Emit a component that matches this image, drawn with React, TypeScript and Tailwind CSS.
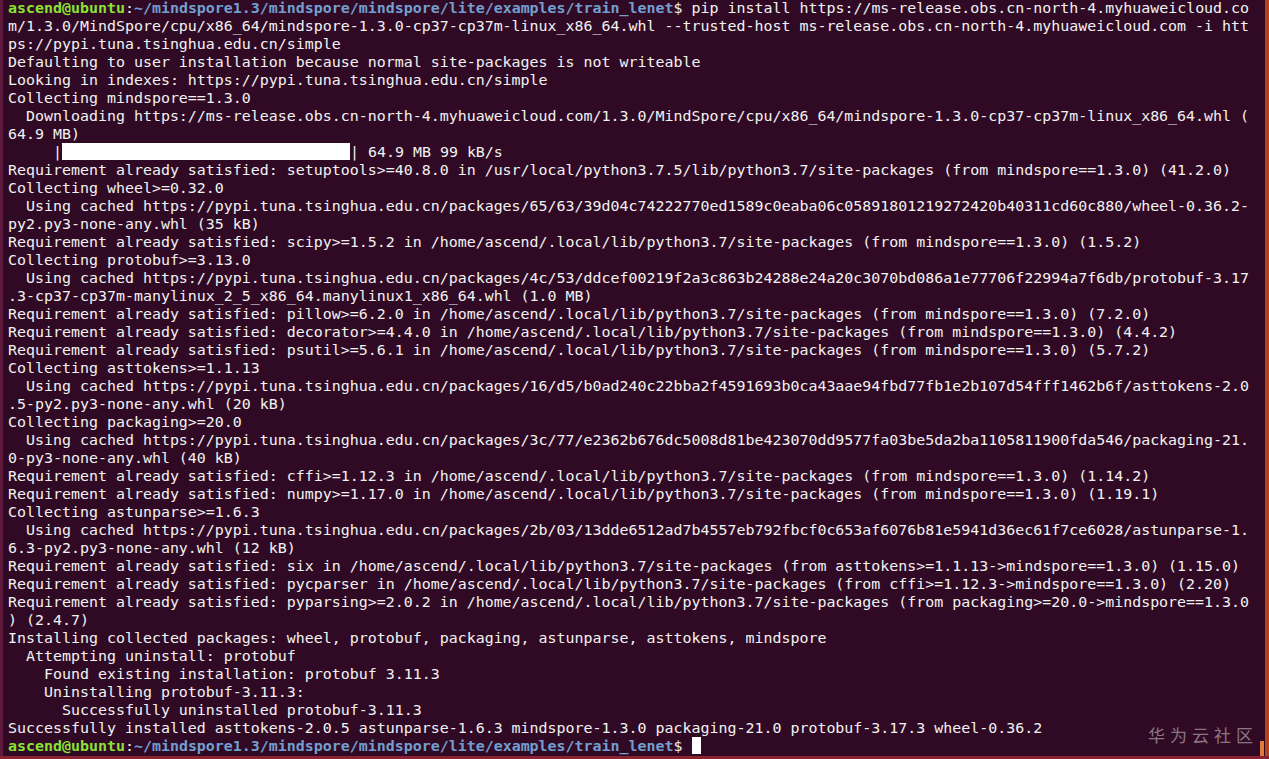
import React from "react";

const lines: string[] = [
	"m/1.3.0/MindSpore/cpu/x86_64/mindspore-1.3.0-cp37-cp37m-linux_x86_64.whl --trusted-host ms-release.obs.cn-north-4.myhuaweicloud.com -i htt",
	"ps://pypi.tuna.tsinghua.edu.cn/simple",
	"Defaulting to user installation because normal site-packages is not writeable",
	"Looking in indexes: https://pypi.tuna.tsinghua.edu.cn/simple",
	"Collecting mindspore==1.3.0",
	"  Downloading https://ms-release.obs.cn-north-4.myhuaweicloud.com/1.3.0/MindSpore/cpu/x86_64/mindspore-1.3.0-cp37-cp37m-linux_x86_64.whl (",
	"64.9 MB)",
];

const rest: string[] = [
	"Requirement already satisfied: setuptools>=40.8.0 in /usr/local/python3.7.5/lib/python3.7/site-packages (from mindspore==1.3.0) (41.2.0)",
	"Collecting wheel>=0.32.0",
	"  Using cached https://pypi.tuna.tsinghua.edu.cn/packages/65/63/39d04c74222770ed1589c0eaba06c05891801219272420b40311cd60c880/wheel-0.36.2-",
	"py2.py3-none-any.whl (35 kB)",
	"Requirement already satisfied: scipy>=1.5.2 in /home/ascend/.local/lib/python3.7/site-packages (from mindspore==1.3.0) (1.5.2)",
	"Collecting protobuf>=3.13.0",
	"  Using cached https://pypi.tuna.tsinghua.edu.cn/packages/4c/53/ddcef00219f2a3c863b24288e24a20c3070bd086a1e77706f22994a7f6db/protobuf-3.17",
	".3-cp37-cp37m-manylinux_2_5_x86_64.manylinux1_x86_64.whl (1.0 MB)",
	"Requirement already satisfied: pillow>=6.2.0 in /home/ascend/.local/lib/python3.7/site-packages (from mindspore==1.3.0) (7.2.0)",
	"Requirement already satisfied: decorator>=4.4.0 in /home/ascend/.local/lib/python3.7/site-packages (from mindspore==1.3.0) (4.4.2)",
	"Requirement already satisfied: psutil>=5.6.1 in /home/ascend/.local/lib/python3.7/site-packages (from mindspore==1.3.0) (5.7.2)",
	"Collecting asttokens>=1.1.13",
	"  Using cached https://pypi.tuna.tsinghua.edu.cn/packages/16/d5/b0ad240c22bba2f4591693b0ca43aae94fbd77fb1e2b107d54fff1462b6f/asttokens-2.0",
	".5-py2.py3-none-any.whl (20 kB)",
	"Collecting packaging>=20.0",
	"  Using cached https://pypi.tuna.tsinghua.edu.cn/packages/3c/77/e2362b676dc5008d81be423070dd9577fa03be5da2ba1105811900fda546/packaging-21.",
	"0-py3-none-any.whl (40 kB)",
	"Requirement already satisfied: cffi>=1.12.3 in /home/ascend/.local/lib/python3.7/site-packages (from mindspore==1.3.0) (1.14.2)",
	"Requirement already satisfied: numpy>=1.17.0 in /home/ascend/.local/lib/python3.7/site-packages (from mindspore==1.3.0) (1.19.1)",
	"Collecting astunparse>=1.6.3",
	"  Using cached https://pypi.tuna.tsinghua.edu.cn/packages/2b/03/13dde6512ad7b4557eb792fbcf0c653af6076b81e5941d36ec61f7ce6028/astunparse-1.",
	"6.3-py2.py3-none-any.whl (12 kB)",
	"Requirement already satisfied: six in /home/ascend/.local/lib/python3.7/site-packages (from asttokens>=1.1.13->mindspore==1.3.0) (1.15.0)",
	"Requirement already satisfied: pycparser in /home/ascend/.local/lib/python3.7/site-packages (from cffi>=1.12.3->mindspore==1.3.0) (2.20)",
	"Requirement already satisfied: pyparsing>=2.0.2 in /home/ascend/.local/lib/python3.7/site-packages (from packaging>=20.0->mindspore==1.3.0",
	") (2.4.7)",
	"Installing collected packages: wheel, protobuf, packaging, astunparse, asttokens, mindspore",
	"  Attempting uninstall: protobuf",
	"    Found existing installation: protobuf 3.11.3",
	"    Uninstalling protobuf-3.11.3:",
	"      Successfully uninstalled protobuf-3.11.3",
	"Successfully installed asttokens-2.0.5 astunparse-1.6.3 mindspore-1.3.0 packaging-21.0 protobuf-3.17.3 wheel-0.36.2",
];

const Prompt = () => (
	<>
		<span className="font-bold text-[#8ae234]">ascend@ubuntu</span>
		<span>:</span>
		<span className="font-bold text-[#729fcf]">
			~/mindspore1.3/mindspore/mindspore/lite/examples/train_lenet
		</span>
		<span>$ </span>
	</>
);

const Row = ({ children }: { children: React.ReactNode }) => (
	<div className="h-[18px] whitespace-pre">{children}</div>
);

export default function App() {
	return (
		<div className="w-[1269px] h-[759px] overflow-hidden flex flex-col bg-[#8a2331]">
			<div className="flex flex-1 min-h-0">
				<div className="w-[3px] bg-[#5e1b3d]" />
				<div className="relative flex-1 bg-[#300a24] pl-[5px] text-[#f2f2f2] text-[14.95px] leading-[18px] font-['DejaVu_Sans_Mono',monospace]">
					<div className="-mt-px">
						<Row>
							<Prompt />
							pip install https://ms-release.obs.cn-north-4.myhuaweicloud.co
						</Row>
						{lines.map((l, i) => (
							<Row key={"a" + i}>{l}</Row>
						))}
						<Row>
							{"     |"}
							<span className="inline-block w-[288px] h-[17px] bg-white align-top" />
							{"| 64.9 MB 99 kB/s"}
						</Row>
						{rest.map((l, i) => (
							<Row key={"b" + i}>{l}</Row>
						))}
						<Row>
							<Prompt />
							<span className="inline-block w-[9px] h-[17px] bg-white align-top" />
						</Row>
					</div>

					{/* watermark */}
					<div className="absolute right-[7px] bottom-[12px] text-[17px] tracking-[5px] text-white/45 font-['Noto_Sans_CJK_SC',sans-serif]">
						华为云社区
					</div>
					{/* scrollbar thumb */}
					<div className="absolute right-[1px] bottom-0 w-[4px] h-[15px] bg-[#e07b39]" />
				</div>
				<div className="w-[4px] bg-[#b5401c]" />
			</div>
			<div className="h-[3px]" />
		</div>
	);
}
